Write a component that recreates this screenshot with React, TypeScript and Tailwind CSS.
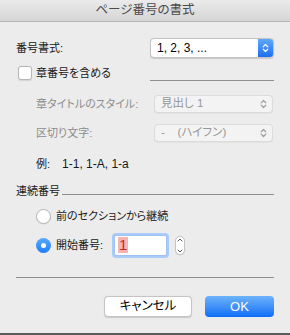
import React from 'react';

const font = { fontFamily: '"Liberation Sans", "Noto Sans CJK JP", sans-serif' };

const Chevrons: React.FC<{ color: string; size?: number }> = ({ color, size = 10 }) => (
  <svg width={size * 0.7} height={size} viewBox="0 0 7 10" fill="none">
    <path d="M1.2 3.8 L3.5 1.5 L5.8 3.8" stroke={color} strokeWidth="1.2" strokeLinecap="round" strokeLinejoin="round" />
    <path d="M1.2 6.2 L3.5 8.5 L5.8 6.2" stroke={color} strokeWidth="1.2" strokeLinecap="round" strokeLinejoin="round" />
  </svg>
);

const DisabledSelect: React.FC<{ children: React.ReactNode }> = ({ children }) => (
  <div className="ml-auto flex h-[18px] w-[119px] shrink-0 items-center rounded-[4px] border border-[#dcdcdc] bg-[#f3f3f3] pl-[6px] pr-[5px] text-[11.5px] text-[#969696] shadow-[0_0.5px_0_rgba(0,0,0,0.08)]">
    <span className="flex-1 whitespace-pre">{children}</span>
    <Chevrons color="#9a9a9a" />
  </div>
);

const Radio: React.FC<{ checked?: boolean }> = ({ checked }) =>
  checked ? (
    <div className="flex h-[15px] w-[15px] shrink-0 items-center justify-center rounded-full bg-gradient-to-b from-[#5aa9ff] to-[#1a7cf5]">
      <div className="h-[5px] w-[5px] rounded-full bg-white" />
    </div>
  ) : (
    <div className="h-[15px] w-[15px] shrink-0 rounded-full border border-[#b5b5b5] bg-white shadow-[0_0.5px_1px_rgba(0,0,0,0.1)]" />
  );

export default function App() {
  return (
    <div
      className="flex h-[335px] w-[290px] flex-col whitespace-nowrap bg-[#ececec] text-[11px] text-[#1a1a1a] [font-feature-settings:'palt']"
      style={font}
    >
      {/* title bar */}
      <div className="flex h-[22px] shrink-0 items-center justify-center border-b border-[#b4b4b4] bg-gradient-to-b from-[#ebebeb] to-[#d5d5d5] text-[12.5px] text-[#4a4a4a]">
        ページ番号の書式
      </div>

      <div className="flex flex-1 flex-col px-[16px]">
        {/* 番号書式 */}
        <div className="mt-[16px] flex h-[20px] items-center">
          <span>番号書式:</span>
          <div className="ml-auto flex h-[20px] w-[124px] items-stretch overflow-hidden rounded-[4px] border border-[#c4c4c4] bg-white shadow-[0_0.5px_1px_rgba(0,0,0,0.15)]">
            <span className="flex flex-1 items-center pl-[6px] text-[12px] text-black">1, 2, 3, ...</span>
            <div className="flex w-[15px] items-center justify-center bg-gradient-to-b from-[#5fa8fb] to-[#1b6ff0]">
              <Chevrons color="#ffffff" />
            </div>
          </div>
        </div>

        {/* 章番号を含める */}
        <div className="mt-[8px] flex h-[14px] items-center">
          <div className="ml-[2px] h-[14px] w-[14px] rounded-[3px] border border-[#b5b5b5] bg-white shadow-[0_0.5px_1px_rgba(0,0,0,0.1)]" />
          <span className="ml-[4px]">章番号を含める</span>
        </div>
        <div className="ml-[134px] h-px bg-[#8e8e8e]" />

        {/* 章タイトルのスタイル */}
        <div className="mt-[14px] flex h-[18px] items-center pl-[20px] pr-px">
          <span className="text-[#8c8c8c]">章タイトルのスタイル:</span>
          <DisabledSelect>見出し 1</DisabledSelect>
        </div>

        {/* 区切り文字 */}
        <div className="mt-[11px] flex h-[18px] items-center pl-[20px] pr-px">
          <span className="text-[#8c8c8c]">区切り文字:</span>
          <DisabledSelect>{'-    (ハイフン)'}</DisabledSelect>
        </div>

        {/* 例 */}
        <div className="mt-[15px] flex h-[14px] items-center pl-[20px]">
          <span>例:</span>
          <span className="ml-[12px] text-[12px]">1-1, 1-A, 1-a</span>
        </div>

        {/* 連続番号 */}
        <div className="mt-[13px] flex h-[14px] items-center">
          <span>連続番号</span>
          <div className="ml-[2px] mt-[6px] h-px flex-1 bg-[#8e8e8e]" />
        </div>

        <div className="mt-[11px] flex h-[15px] items-center pl-[20px]">
          <Radio />
          <span className="ml-[5px]">前のセクションから継続</span>
        </div>

        <div className="mt-[10px] flex h-[22px] items-center pl-[20px]">
          <Radio checked />
          <span className="ml-[5px]">開始番号:</span>
          <div className="ml-[11px] flex h-[21px] w-[53px] items-center rounded-[2px] border border-[#9cc2f4] bg-white pl-[3px] shadow-[0_0_0_2px_#a9cdf8]">
            <span className="bg-[#f5b5b5] px-px text-[15px] leading-[16px] text-[#c42a2a]">1</span>
          </div>
          <div className="ml-[8px] flex h-[19px] w-[10px] flex-col items-center justify-between rounded-[5px] border border-[#c4c4c4] bg-white py-[1px] shadow-[0_0.5px_1px_rgba(0,0,0,0.1)]">
            <svg width="6" height="4" viewBox="0 0 6 4" fill="none">
              <path d="M1 3 L3 1 L5 3" stroke="#555" strokeWidth="1" strokeLinecap="round" />
            </svg>
            <svg width="6" height="4" viewBox="0 0 6 4" fill="none">
              <path d="M1 1 L3 3 L5 1" stroke="#555" strokeWidth="1" strokeLinecap="round" />
            </svg>
          </div>
        </div>

        <div className="mt-[21px] h-px bg-[#8e8e8e]" />

        {/* buttons */}
        <div className="mt-[18px] flex h-[21px] justify-end gap-[13px]">
          <button className="flex h-[21px] w-[88px] items-center justify-center rounded-[4px] border border-[#c4c4c4] bg-white text-[12.5px] text-black shadow-[0_0.5px_1px_rgba(0,0,0,0.15)] [font-feature-settings:'palt']" style={font}>
            キャンセル
          </button>
          <button className="flex h-[21px] w-[69px] items-center justify-center rounded-[4px] bg-gradient-to-b from-[#6cb3fa] to-[#0c6cf5] text-[13px] text-white" style={font}>
            OK
          </button>
        </div>
      </div>

      <div className="h-[2px] shrink-0 bg-[#5a5a5a]" />
    </div>
  );
}
